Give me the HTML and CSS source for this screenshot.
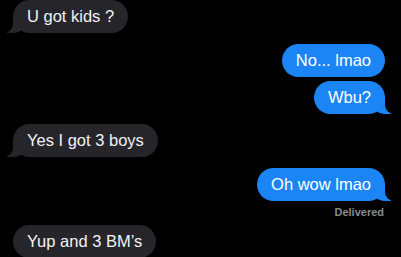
FILE: index.html
```html
<!DOCTYPE html>
<html>
<head>
    <title>Messages</title>
    <meta charset="UTF-8" />
    <link rel="stylesheet" href="styles.css">
</head>
<body>
    <div class="thread">
        <div class="row them"><div class="bubble gray tail">U got kids ?</div></div>
        <div class="row me gap"><div class="bubble blue">No... lmao</div></div>
        <div class="row me close"><div class="bubble blue tail">Wbu?</div></div>
        <div class="row them gap"><div class="bubble gray tail">Yes I got 3 boys</div></div>
        <div class="row me gap"><div class="bubble blue tail">Oh wow lmao</div></div>
        <div class="status">Delivered</div>
        <div class="row them last"><div class="bubble gray">Yup and 3 BM’s</div></div>
    </div>
</body>
</html>
```
FILE: styles.css
```css
body {
    margin: 0;
    background: #000;
    font-family: "Liberation Sans", Arial, sans-serif;
    overflow: hidden;
}

.thread {
    display: flex;
    flex-direction: column;
    padding: 0 16px 0 13px;
}

.row {
    display: flex;
}

.row.them {
    justify-content: flex-start;
}

.row.me {
    justify-content: flex-end;
}

.row.gap {
    margin-top: 10px;
}

.row.me.gap {
    margin-top: 11px;
}

.row.close {
    margin-top: 4px;
}

.row.last {
    margin-top: 6px;
}

.bubble {
    position: relative;
    font-size: 16.5px;
    line-height: 21px;
    padding: 6px 14px;
    border-radius: 17px;
    color: #fff;
}

.bubble.gray {
    background: #26262a;
    color: #f2f2f4;
}

.bubble.blue {
    background: #1b85f6;
}

/* iOS style tail */
.them .tail::before {
    content: "";
    position: absolute;
    bottom: 0;
    left: -6px;
    width: 20px;
    height: 18px;
    background: #26262a;
    border-bottom-right-radius: 14px;
}

.them .tail::after {
    content: "";
    position: absolute;
    bottom: 0;
    left: -10px;
    width: 10px;
    height: 18px;
    background: #000;
    border-bottom-right-radius: 9px;
}

.me .tail::before {
    content: "";
    position: absolute;
    bottom: 0;
    right: -6px;
    width: 20px;
    height: 18px;
    background: #1b85f6;
    border-bottom-left-radius: 14px;
}

.me .tail::after {
    content: "";
    position: absolute;
    bottom: 0;
    right: -10px;
    width: 10px;
    height: 18px;
    background: #000;
    border-bottom-left-radius: 9px;
}

.status {
    align-self: flex-end;
    margin: 5px 1px 0 0;
    font-size: 11px;
    line-height: 13px;
    font-weight: bold;
    color: #8a8a8f;
}
```
